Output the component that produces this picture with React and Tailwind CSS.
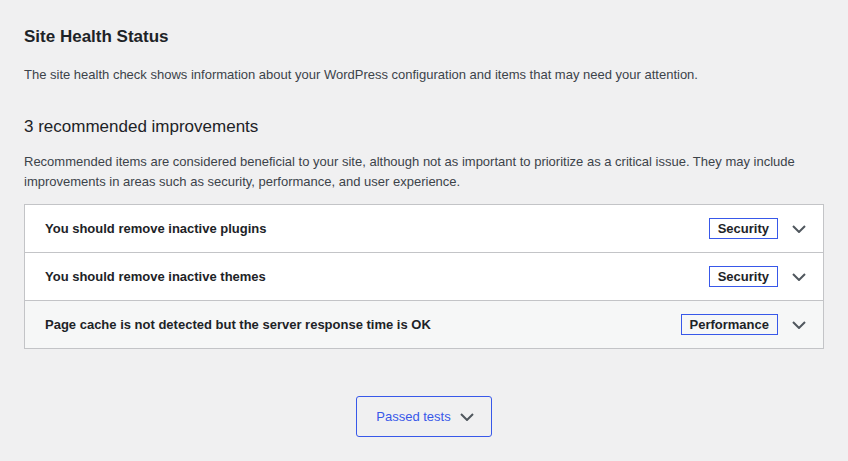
import React from 'react';

const ISSUES = [
  { title: 'You should remove inactive plugins', badge: 'Security' },
  { title: 'You should remove inactive themes', badge: 'Security' },
  { title: 'Page cache is not detected but the server response time is OK', badge: 'Performance', active: true },
];

function Chevron({ className = '' }) {
  return (
    <svg width="14" height="8" viewBox="0 0 14 8" className={className} fill="none">
      <polyline points="1,1 7,7 13,1" stroke="#50575e" strokeWidth="2" />
    </svg>
  );
}

export default function App() {
  return (
    <div className="min-h-screen bg-[#f0f0f1] px-6 pt-[25px] font-['Liberation_Sans',Arial,sans-serif] text-[#1d2327]">
      {/* Header */}
      <h2 className="text-[17px] leading-[24px] font-bold">Site Health Status</h2>
      <p className="mt-4 text-[13px] leading-[20px] text-[#3c434a]">
        The site health check shows information about your WordPress configuration and items that may need your attention.
      </p>

      {/* Recommended improvements */}
      <h3 className="mt-[30px] text-[17px] leading-[24px] font-normal">3 recommended improvements</h3>
      <p className="mt-[13px] text-[13px] leading-[20px] text-[#3c434a]">
        Recommended items are considered beneficial to your site, although not as important to prioritize as a critical issue. They may include improvements in areas such as security, performance, and user experience.
      </p>

      <div className="mt-3 border border-[#c3c4c7] bg-white">
        {ISSUES.map((item, idx) => (
          <div
            key={idx}
            className={`flex items-center pl-5 pr-[17px] ${idx > 0 ? 'h-[48px] border-t border-[#c3c4c7]' : 'h-[47px]'} ${
              item.active ? 'bg-[#f6f7f7]' : 'bg-white'
            }`}
          >
            <span className="flex-1 text-[13px] font-bold text-[#1d2327]">{item.title}</span>
            <span className="border border-[#3858e9] px-2 text-[13px] leading-[19px] font-bold text-[#1d2327]">
              {item.badge}
            </span>
            <Chevron className="ml-[14px]" />
          </div>
        ))}
      </div>

      {/* Passed tests */}
      <div className="mt-[47px] flex justify-center">
        <button className="flex h-[41px] items-center gap-[9px] rounded-[3px] border border-[#3858e9] pl-[19px] pr-[17px] text-[13px] text-[#3858e9]">
          Passed tests
          <Chevron />
        </button>
      </div>
    </div>
  );
}
